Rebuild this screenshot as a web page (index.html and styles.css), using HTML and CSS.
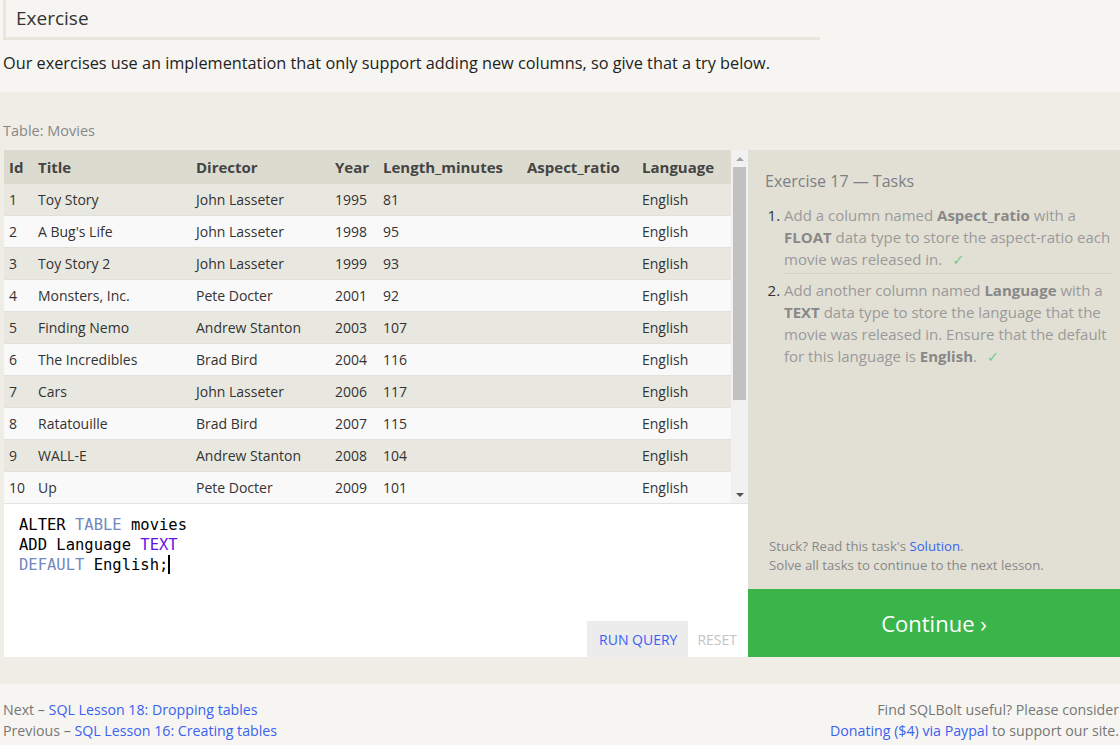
FILE: index.html
```html
<!DOCTYPE html>
<html>
<head>
<meta charset="utf-8">
<link rel="stylesheet" href="styles.css">
</head>
<body>
<div class="intro">
  <h2 class="exercise-title">Exercise</h2>
  <p class="intro-text">Our exercises use an implementation that only support adding new columns, so give that a try below.</p>
</div>
<div class="band">
  <div class="table-label">Table: Movies</div>
  <div class="workspace">
    <div class="left">
      <div class="table-wrap">
        <div class="table-clip">
          <table class="movies">
            <colgroup>
              <col class="c-id"><col class="c-title"><col class="c-dir"><col class="c-year"><col class="c-len"><col class="c-asp"><col class="c-lang">
            </colgroup>
            <thead>
              <tr><th>Id</th><th>Title</th><th>Director</th><th>Year</th><th>Length_minutes</th><th>Aspect_ratio</th><th>Language</th></tr>
            </thead>
            <tbody>
              <tr><td>1</td><td>Toy Story</td><td>John Lasseter</td><td>1995</td><td>81</td><td></td><td>English</td></tr>
              <tr><td>2</td><td>A Bug's Life</td><td>John Lasseter</td><td>1998</td><td>95</td><td></td><td>English</td></tr>
              <tr><td>3</td><td>Toy Story 2</td><td>John Lasseter</td><td>1999</td><td>93</td><td></td><td>English</td></tr>
              <tr><td>4</td><td>Monsters, Inc.</td><td>Pete Docter</td><td>2001</td><td>92</td><td></td><td>English</td></tr>
              <tr><td>5</td><td>Finding Nemo</td><td>Andrew Stanton</td><td>2003</td><td>107</td><td></td><td>English</td></tr>
              <tr><td>6</td><td>The Incredibles</td><td>Brad Bird</td><td>2004</td><td>116</td><td></td><td>English</td></tr>
              <tr><td>7</td><td>Cars</td><td>John Lasseter</td><td>2006</td><td>117</td><td></td><td>English</td></tr>
              <tr><td>8</td><td>Ratatouille</td><td>Brad Bird</td><td>2007</td><td>115</td><td></td><td>English</td></tr>
              <tr><td>9</td><td>WALL-E</td><td>Andrew Stanton</td><td>2008</td><td>104</td><td></td><td>English</td></tr>
              <tr><td>10</td><td>Up</td><td>Pete Docter</td><td>2009</td><td>101</td><td></td><td>English</td></tr>
              <tr><td>11</td><td>Toy Story 3</td><td>Lee Unkrich</td><td>2010</td><td>103</td><td></td><td>English</td></tr>
              <tr><td>12</td><td>Cars 2</td><td>John Lasseter</td><td>2011</td><td>120</td><td></td><td>English</td></tr>
              <tr><td>13</td><td>Brave</td><td>Brenda Chapman</td><td>2012</td><td>102</td><td></td><td>English</td></tr>
              <tr><td>14</td><td>Monsters University</td><td>Dan Scanlon</td><td>2013</td><td>110</td><td></td><td>English</td></tr>
            </tbody>
          </table>
        </div>
        <div class="scrollbar">
          <div class="sb-btn"><span class="arrow-up"></span></div>
          <div class="sb-track"><div class="sb-thumb"></div></div>
          <div class="sb-btn"><span class="arrow-down"></span></div>
        </div>
      </div>
      <div class="editor">
        <div class="code">
          <div class="code-line">ALTER <span class="kw">TABLE</span> movies</div>
          <div class="code-line">ADD Language <span class="kw-type">TEXT</span></div>
          <div class="code-line"><span class="kw">DEFAULT</span> English;<span class="cursor"></span></div>
        </div>
        <div class="editor-actions">
          <span class="btn-run">RUN QUERY</span>
          <span class="btn-reset">RESET</span>
        </div>
      </div>
    </div>
    <div class="right">
      <div class="tasks">
        <h3 class="tasks-title">Exercise 17 — Tasks</h3>
        <ol class="task-list">
          <li>Add a column named <b>Aspect_ratio</b> with a <b>FLOAT</b> data type to store the aspect-ratio each movie was released in. <span class="check">✓</span></li>
          <li>Add another column named <b>Language</b> with a <b>TEXT</b> data type to store the language that the movie was released in. Ensure that the default for this language is <b>English</b>. <span class="check">✓</span></li>
        </ol>
        <div class="tasks-foot">
          <div>Stuck? Read this task's <a class="link">Solution</a>.</div>
          <div>Solve all tasks to continue to the next lesson.</div>
        </div>
      </div>
      <div class="continue">Continue ›</div>
    </div>
  </div>
</div>
<div class="footer">
  <div class="footer-left">
    <div>Next – <a class="link">SQL Lesson 18: Dropping tables</a></div>
    <div>Previous – <a class="link">SQL Lesson 16: Creating tables</a></div>
  </div>
  <div class="footer-right">
    <div>Find SQLBolt useful? Please consider</div>
    <div><a class="link">Donating ($4) via Paypal</a> to support our site.</div>
  </div>
</div>
</body>
</html>
```
FILE: styles.css
```css
html, body {
  margin: 0;
  padding: 0;
  background: #f6f5f1;
  font-family: "Open Sans", "DejaVu Sans", sans-serif;
  color: #333;
}
.intro {
  padding: 0 0 0 3px;
  height: 92px;
}
.exercise-title {
  margin: 0;
  width: 804px;
  border-left: 3px solid #e8e6dc;
  border-bottom: 3px solid #e8e6dc;
  padding: 5px 0 6px 10px;
  font-size: 19px;
  line-height: 26px;
  font-weight: normal;
  color: #333;
}
.intro-text {
  margin: 10px 0 0 0;
  font-size: 16.3px;
  line-height: 26px;
  color: #222;
}
.band {
  background: #efede6;
  padding: 20px 0 27px 0;
}
.table-label {
  padding-left: 3px;
  font-size: 14.5px;
  line-height: 38px;
  color: #888;
}
.workspace {
  display: flex;
  padding-left: 4px;
}
.left {
  width: 744px;
  display: flex;
  flex-direction: column;
}
.table-wrap {
  display: flex;
  height: 353px;
}
.table-clip {
  width: 727px;
  height: 353px;
  overflow: hidden;
}
.movies {
  border-collapse: collapse;
  table-layout: fixed;
  width: 727px;
  font-size: 14px;
}
.c-id { width: 29px; }
.c-title { width: 158px; }
.c-dir { width: 139px; }
.c-year { width: 48px; }
.c-len { width: 144px; }
.c-asp { width: 115px; }
.c-lang { width: 94px; }
.movies th {
  background: #dcdbcf;
  text-align: left;
  font-size: 15px;
  font-weight: bold;
  color: #444;
  height: 34px;
  padding: 0 0 0 5px;
  white-space: nowrap;
}
.movies td {
  height: 31px;
  padding: 0 0 0 5px;
  border-bottom: 1px solid #e2e1d9;
  color: #333;
  white-space: nowrap;
}
.movies tbody tr:nth-child(odd) td { background: #e9e8e0; }
.movies tbody tr:nth-child(even) td { background: #f9f9f9; }
.scrollbar {
  width: 17px;
  background: #f1f1f1;
  display: flex;
  flex-direction: column;
}
.sb-btn {
  height: 17px;
  display: flex;
  align-items: center;
  justify-content: center;
}
.arrow-up {
  width: 0; height: 0;
  border-left: 4px solid transparent;
  border-right: 4px solid transparent;
  border-bottom: 4px solid #a3a3a3;
}
.arrow-down {
  width: 0; height: 0;
  border-left: 4px solid transparent;
  border-right: 4px solid transparent;
  border-top: 4px solid #505050;
}
.sb-track {
  flex: 1;
  padding: 0 2px;
}
.sb-thumb {
  height: 233px;
  background: #c1c1c1;
}
.editor {
  background: #fff;
  border-top: 1px solid #e4e4e4;
  height: 153px;
  display: flex;
  flex-direction: column;
}
.code {
  padding: 11px 0 0 15px;
  font-family: "DejaVu Sans Mono", "Liberation Mono", monospace;
  font-size: 15.5px;
  color: #000;
  flex: 1;
}
.code-line {
  height: 20px;
  line-height: 20px;
  white-space: pre;
}
.kw { color: #7388bd; }
.kw-type { color: #6010e8; }
.cursor {
  display: inline-block;
  width: 2px;
  height: 19px;
  background: #000;
  vertical-align: -4px;
}
.editor-actions {
  display: flex;
  justify-content: flex-end;
  align-items: center;
  padding-right: 11px;
  height: 36px;
}
.btn-run {
  background: #ececec;
  color: #3a5ff5;
  font-size: 14px;
  line-height: 36px;
  padding: 1px 11px 0 12px;
}
.btn-reset {
  color: #c4c4c4;
  font-size: 14px;
  padding: 1px 0 0 9px;
}
.right {
  width: 372px;
  display: flex;
  flex-direction: column;
}
.tasks {
  background: #e2e0d5;
  flex: 1;
  padding: 19px 8px 14px 17px;
  display: flex;
  flex-direction: column;
}
.tasks-title {
  margin: 0;
  font-size: 16px;
  font-weight: normal;
  line-height: 24px;
  color: #7c7f85;
}
.task-list {
  margin: 11px 0 0 0;
  padding: 0 0 0 19px;
  font-size: 15px;
  line-height: 22px;
  color: #9a9a9a;
}
.task-list li {
  padding: 0 0 3px 0;
}
.task-list li::marker {
  color: #333;
}
.task-list li + li {
  border-top: 1px solid #d3d1c6;
  padding-top: 5px;
}
.task-list b {
  color: #888;
}
.check {
  color: #7ccb8a;
  margin-left: 6px;
}
.tasks-foot {
  margin-top: auto;
  font-size: 13.2px;
  line-height: 19px;
  color: #888;
  padding-left: 4px;
}
.link {
  color: #3a62f0;
  text-decoration: none;
}
.continue {
  background: #3ab54a;
  color: #fff;
  height: 68px;
  font-size: 22px;
  display: flex;
  align-items: center;
  justify-content: center;
}
.footer {
  display: flex;
  justify-content: space-between;
  padding: 15px 1px 0 3px;
  font-size: 14.2px;
  line-height: 21px;
  color: #777;
}
.footer-right {
  text-align: right;
}
```
